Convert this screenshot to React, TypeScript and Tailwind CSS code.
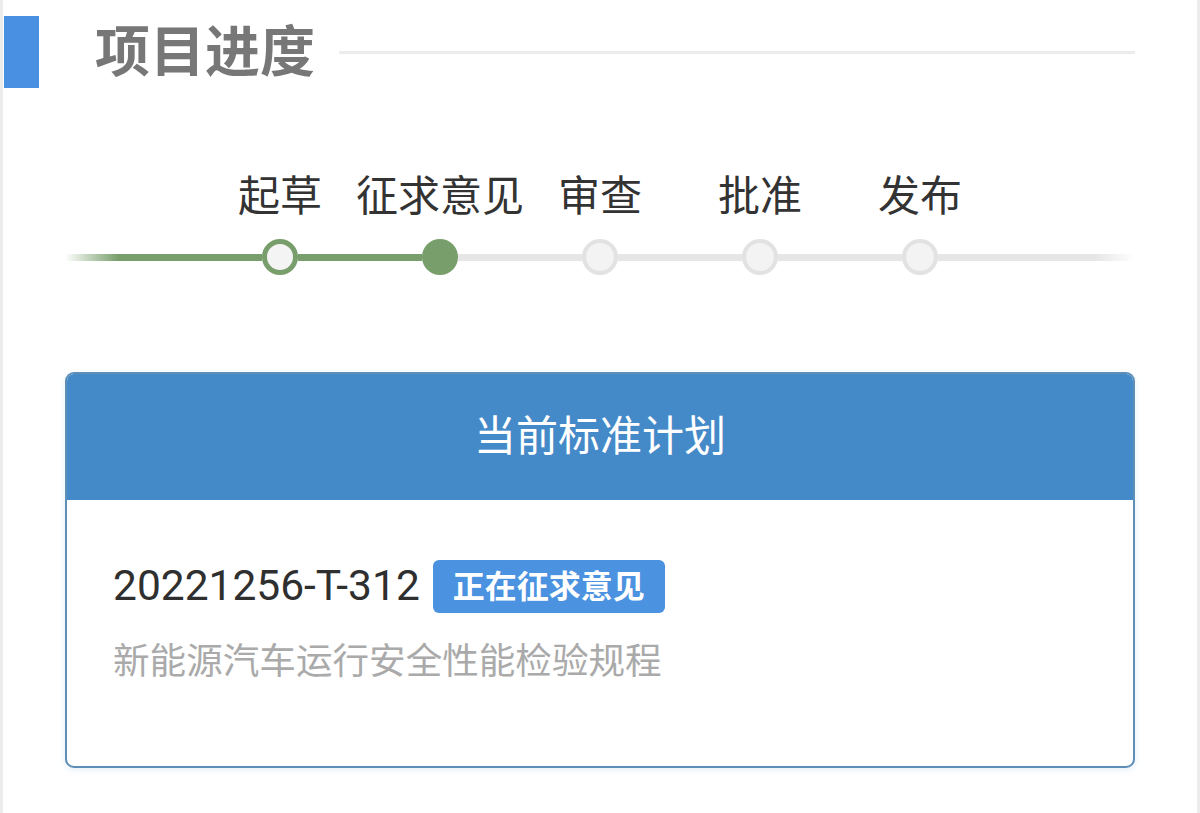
import React from "react"

const steps = [
  { label: "起草",     state: "done" },
  { label: "征求意见", state: "current" },
  { label: "审查",     state: "todo" },
  { label: "批准",     state: "todo" },
  { label: "发布",     state: "todo" },
] as const

const cjk = "font-['Roboto','Noto_Sans_CJK_SC',sans-serif]"

function StepDot({ state }: { state: "done" | "current" | "todo" }) {
  if (state === "done")
    return <div className="w-[36px] h-[36px] shrink-0 rounded-full border-[5px] border-[#779e6b] bg-[#f4f4f4]" />
  if (state === "current")
    return <div className="w-[36px] h-[36px] shrink-0 rounded-full bg-[#779e6b]" />
  return <div className="w-[36px] h-[36px] shrink-0 rounded-full border-[4px] border-[#e2e2e2] bg-[#f3f3f3]" />
}

export default function App() {
  return (
    <div className={`w-full h-[813px] bg-white border-x-[3px] border-[#ececec] ${cjk}`}>

      {/* Section header */}
      <div className="flex items-center pt-[16px]">
        <div className="ml-[1px] w-[35px] h-[72px] bg-[#4a90e2]" />
        <h1 className="ml-[56px] text-[55px] font-bold leading-none text-[#777777]">项目进度</h1>
        <div className="flex-1 ml-[24px] mr-[62px] h-[3px] bg-[#ececec]" />
      </div>

      {/* Stepper */}
      <div className="mx-[62px] mt-[84px]">
        <div className="flex justify-center">
          {steps.map(s => (
            <div key={s.label} className="w-[160px] flex justify-center whitespace-nowrap text-[42px] leading-[50px] text-[#333333]">
              {s.label}
            </div>
          ))}
        </div>
        <div className="flex items-center mt-[17px] h-[36px]">
          <div className="flex-1 h-[7px] bg-gradient-to-r from-white via-[#779e6b] via-40% to-[#779e6b]" />
          {steps.map((s, i) => {
            const leftGreen  = i <= 1
            const rightGreen = i === 0
            return (
              <div key={s.label} className="w-[160px] flex items-center">
                <div className={`flex-1 h-[7px] ${leftGreen ? "bg-[#779e6b]" : "bg-[#e6e6e6]"}`} />
                <StepDot state={s.state} />
                <div className={`flex-1 h-[7px] ${rightGreen ? "bg-[#779e6b]" : "bg-[#e6e6e6]"}`} />
              </div>
            )
          })}
          <div className="flex-1 h-[7px] bg-gradient-to-r from-[#e6e6e6] via-[#e6e6e6] via-70% to-white" />
        </div>
      </div>

      {/* Current plan card */}
      <div className="mx-[62px] mt-[97px] h-[396px] rounded-[9px] border-2 border-[#5d8fb9] overflow-hidden shadow-[0_2px_6px_rgba(180,210,230,0.35)]">
        <div className="h-[126px] bg-[#4489c8] flex items-center justify-center">
          <span className="text-[42px] text-white leading-none">当前标准计划</span>
        </div>
        <div className="px-[46px] pt-[60px]">
          <div className="flex items-center">
            <span className="text-[42.5px] leading-none text-[#2f2f2f]">20221256-T-312</span>
            <span className="ml-[13px] h-[53px] px-[20px] rounded-[6px] bg-[#4b92e0] text-white text-[32px] font-bold flex items-center">
              正在征求意见
            </span>
          </div>
          <p className="mt-[24px] text-[36.6px] leading-[50px] text-[#aaaaaa]">新能源汽车运行安全性能检验规程</p>
        </div>
      </div>
    </div>
  )
}
